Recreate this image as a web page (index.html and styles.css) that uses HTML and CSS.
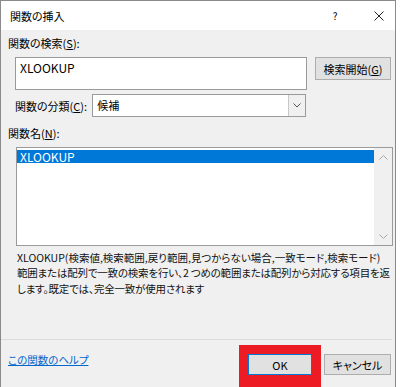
FILE: index.html
```html
<!DOCTYPE html>
<html>
<head>
    <title>関数の挿入</title>
    <link rel="stylesheet" href="styles.css">
</head>
<body>
    <div class="dialog">
        <!-- Title bar -->
        <div class="titlebar">
            <span class="title">関数の挿入</span>
            <span class="tb-help">?</span>
            <span class="tb-close">
                <svg width="10" height="10" viewBox="0 0 10 10"><path d="M0.5 0.5 L9.5 9.5 M9.5 0.5 L0.5 9.5" stroke="#222" stroke-width="1" fill="none"/></svg>
            </span>
        </div>

        <div class="content">
            <div class="label">関数の検索(<u>S</u>):</div>
            <div class="search-row">
                <div class="search-box">XLOOKUP</div>
                <button class="btn search-btn">検索開始(<u>G</u>)</button>
            </div>

            <div class="category-row">
                <span class="label">関数の分類(<u>C</u>):</span>
                <div class="select">
                    <span class="select-text">候補</span>
                    <span class="select-arrow">
                        <svg width="8" height="5" viewBox="0 0 8 5"><polyline points="0.5,0.5 4,4 7.5,0.5" stroke="#555" fill="none"/></svg>
                    </span>
                </div>
            </div>

            <div class="label name-label">関数名(<u>N</u>):</div>
            <div class="listbox">
                <div class="list-items">
                    <div class="list-item selected">XLOOKUP</div>
                </div>
                <div class="scrollbar">
                    <svg width="9" height="5" viewBox="0 0 9 5"><polyline points="0.5,4.5 4.5,0.5 8.5,4.5" stroke="#a6a6a6" fill="none"/></svg>
                    <svg width="9" height="5" viewBox="0 0 9 5"><polyline points="0.5,0.5 4.5,4.5 8.5,0.5" stroke="#a6a6a6" fill="none"/></svg>
                </div>
            </div>

            <div class="desc">
                <div class="desc-syntax">XLOOKUP(検索値,検索範囲,戻り範囲,見つからない場合,一致モード,検索モード)</div>
                <div class="desc-text">範囲または配列で一致の検索を行い、2 つめの範囲または配列から対応する項目を返<br>します。既定では、完全一致が使用されます</div>
            </div>
        </div>

        <!-- Footer with help link and buttons -->
        <div class="footer">
            <a class="help-link" href="#">この関数のヘルプ</a>
            <div class="buttons">
                <div class="highlight">
                    <button class="btn ok-btn">OK</button>
                </div>
                <button class="btn cancel-btn">キャンセル</button>
            </div>
        </div>
    </div>
</body>
</html>
```
FILE: styles.css
```css
body {
    margin: 0;
    background-color: #fff;
    font-family: "Noto Sans CJK JP", sans-serif;
    font-feature-settings: "palt";
    color: #000;
    overflow: hidden;
}

u {
    text-decoration: underline;
    text-underline-offset: 1px;
}

/* Dialog frame */
.dialog {
    width: 394px;
    height: 400px;
    border: 1px solid #8a8a8a;
    border-bottom: none;
    background-color: #f0f0f0;
}

/* Title bar */
.titlebar {
    height: 29px;
    background-color: #fff;
    display: flex;
    align-items: center;
    padding-left: 9px;
    font-size: 11px;
}

.title {
    flex: 1;
}

.tb-help {
    width: 20px;
    text-align: center;
    font-size: 10px;
    margin-right: 24px;
}

.tb-close {
    width: 20px;
    display: flex;
    justify-content: center;
    margin-right: 6px;
}

/* Main content */
.content {
    height: 309px;
    box-sizing: border-box;
    padding: 5px 0 0 7px;
}

.label {
    font-size: 11px;
    line-height: 16px;
}

.search-row {
    display: flex;
    align-items: flex-start;
    gap: 8px;
    margin: 6px 0 0 7px;
}

.search-box {
    width: 292px;
    height: 33px;
    box-sizing: border-box;
    border: 1px solid #9a9a9a;
    background-color: #fff;
    font-size: 12px;
    line-height: 14px;
    padding: 3px 4px;
}

.btn {
    font-family: inherit;
    font-feature-settings: "palt";
    font-size: 11px;
    color: #000;
    background-color: #e1e1e1;
    border: 1px solid #adadad;
    padding: 0;
    box-sizing: border-box;
}

.search-btn {
    width: 76px;
    height: 23px;
}

.category-row {
    display: flex;
    align-items: center;
    gap: 5px;
    margin: 4px 0 0 7px;
}

.select {
    width: 214px;
    height: 23px;
    box-sizing: border-box;
    border: 1px solid #9a9a9a;
    background-color: #fff;
    display: flex;
    align-items: stretch;
}

.select-text {
    flex: 1;
    font-size: 11px;
    line-height: 21px;
    padding-left: 4px;
}

.select-arrow {
    width: 16px;
    border-left: 1px solid #c8c8c8;
    background-color: #f0f0f0;
    display: flex;
    align-items: center;
    justify-content: center;
}

.name-label {
    margin-top: 8px;
}

/* Function list */
.listbox {
    width: 377px;
    height: 99px;
    box-sizing: border-box;
    margin: 6px 0 0 8px;
    border: 1px solid #9a9a9a;
    background-color: #fff;
    display: flex;
}

.list-items {
    flex: 1;
    padding-top: 2px;
}

.list-item {
    font-size: 12px;
    line-height: 13px;
    padding-left: 3px;
}

.list-item.selected {
    background-color: #0078d7;
    color: #fff;
}

.scrollbar {
    width: 18px;
    background-color: #f0f0f0;
    display: flex;
    flex-direction: column;
    align-items: center;
    justify-content: space-between;
    padding: 7px 0 6px;
    box-sizing: border-box;
}

/* Description */
.desc {
    margin: 4px 0 0 9px;
    white-space: nowrap;
    color: #111;
}

.desc-syntax {
    font-size: 10.5px;
    line-height: 15px;
}

.desc-text {
    font-size: 10.5px;
    line-height: 16px;
    letter-spacing: -0.2px;
}

/* Footer */
.footer {
    display: flex;
    align-items: flex-start;
    justify-content: space-between;
    border-top: 1px solid #dcdcdc;
    margin-right: 3px;
    padding: 5px 1px 0 7px;
}

.help-link {
    font-size: 10.5px;
    line-height: 16px;
    margin-top: 7px;
    color: #0066cc;
}

.buttons {
    display: flex;
    align-items: flex-start;
    gap: 3px;
}

.highlight {
    background-color: #ed1c24;
    padding: 9px 9px 13px;
}

.ok-btn {
    width: 64px;
    height: 21px;
    border-color: #0078d7;
    display: block;
}

.cancel-btn {
    width: 67px;
    height: 21px;
    margin-top: 9px;
}
```
